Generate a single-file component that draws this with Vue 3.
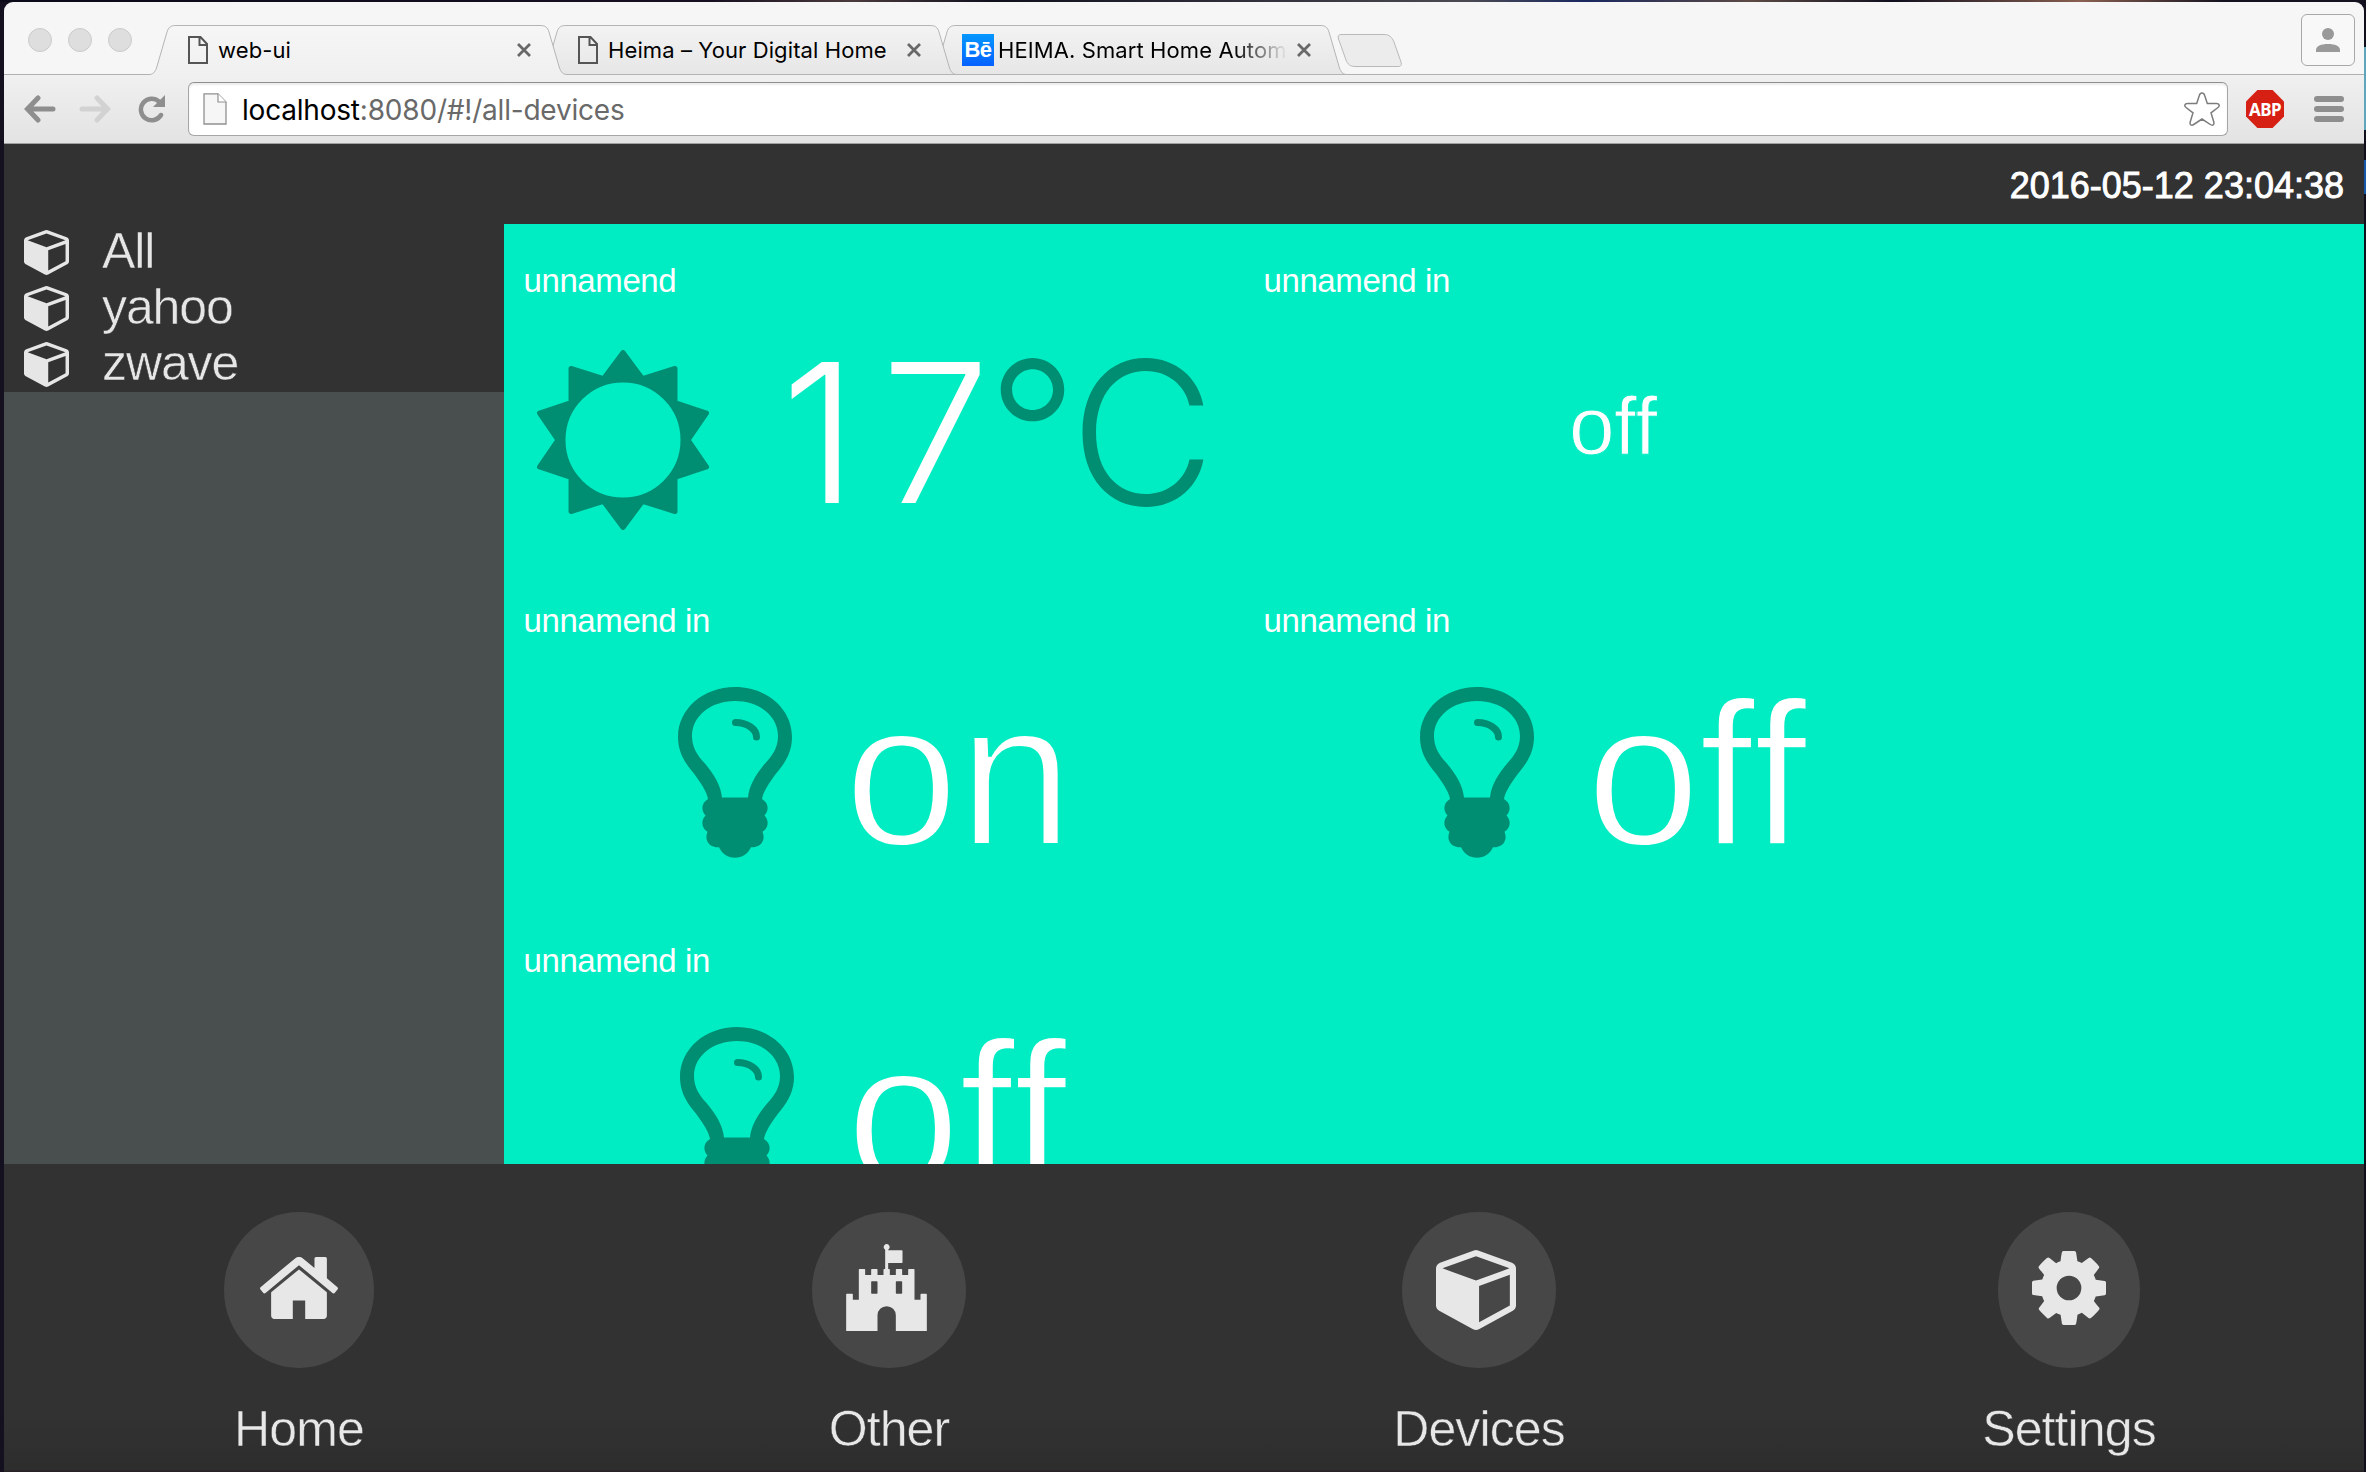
<script setup>
const tabs = [
  { title: 'web-ui', icon: 'page', active: true },
  { title: 'Heima – Your Digital Home', icon: 'page' },
  { title: 'HEIMA. Smart Home Autom', icon: 'be' },
]

const groups = ['All', 'yahoo', 'zwave']

const devices = [
  { id: 1, name: 'unnamend', kind: 'weather', value: '17', unit: '°C' },
  { id: 2, name: 'unnamend in', kind: 'plain', value: 'off' },
  { id: 3, name: 'unnamend in', kind: 'light', value: 'on' },
  { id: 4, name: 'unnamend in', kind: 'light', value: 'off' },
  { id: 5, name: 'unnamend in', kind: 'light', value: 'off' },
]

const cubePath =
  'M896 1629l640-349v-636l-640 233v752zm-64-865l698-254-698-254-698 254zm832-252v768q0 35-18 65t-49 47l-704 384q-28 16-61 16t-61-16l-704-384q-31-17-49-47t-18-65v-768q0-40 23-73t61-47l704-256q22-8 44-8t44 8l704 256q38 14 61 47t23 73z'

const nav = [
  {
    label: 'Home',
    key: 'home',
    box: '26 256 1612 1280',
    path: 'M1408 992v480q0 26-19 45t-45 19h-384v-384h-256v384h-384q-26 0-45-19t-19-45v-480q0-1 .5-3t.5-3l575-474 575 474q1 2 1 6zm223-69l-62 74q-8 9-21 11h-3q-13 0-21-7l-692-577-692 577q-12 8-24 7-13-2-21-11l-62-74q-8-10-7-23.5t11-21.5l719-599q32-26 76-26t76 26l244 204v-195q0-14 9-23t23-9h192q14 0 23 9t9 23v408l219 182q10 8 11 21.5t-7 23.5z',
  },
  {
    label: 'Other',
    key: 'other',
    box: '196 161 242 261',
    path: 'M196 422V312q0-2 2-2h16q2 0 2 2v16h18V238q0-2 2-2h15q2 0 2 2v16h18V238q0-2 2-2h15q2 0 2 2v16h18V238q0-2 2-2h3V178a9 9 0 1 1 9 0v2h41q2 0 2 2v34q0 2-2 2h-41v18h3q2 0 2 2v16h18V238q0-2 2-2h15q2 0 2 2v16h18V238q0-2 2-2h15q2 0 2 2v90h18V312q0-2 2-2h15q2 0 2 2V422h-93V375a27.500 27.500 0 0 0-55 0V422zM273 273q-2 0-2 2v33q0 2 2 2h15q2 0 2-2v-33q0-2-2-2zM347 273q-2 0-2 2v33q0 2 2 2h15q2 0 2-2v-33q0-2-2-2z',
  },
  { label: 'Devices', key: 'devices-link', box: '0 128 1664 1664', path: cubePath },
  {
    label: 'Settings',
    key: 'settings',
    box: '128 128 1536 1536',
    path: 'M1152 896q0-106-75-181t-181-75-181 75-75 181 75 181 181 75 181-75 75-181zm512-109v222q0 12-8 23t-20 13l-185 28q-19 54-39 91 35 50 107 138 10 12 10 25t-9 23q-27 37-99 108t-94 71q-12 0-26-9l-138-108q-44 23-91 38-16 136-29 186-7 28-36 28h-222q-14 0-24.500-8.500t-11.500-21.500l-28-184q-49-16-90-37l-141 107q-10 9-25 9-14 0-25-11-126-114-165-168-7-10-7-23 0-12 8-23 15-21 51-66.500t54-70.500q-27-50-41-99l-183-27q-13-2-21-12.500t-8-23.500v-222q0-12 8-23t19-13l186-28q14-46 39-92-40-57-107-138-10-12-10-24 0-10 9-23 26-36 98.500-107.500t94.500-71.500q13 0 26 10l138 107q44-23 91-38 16-136 29-186 7-28 36-28h222q14 0 24.500 8.500t11.500 21.500l28 184q49 16 90 37l142-107q9-9 24-9 13 0 25 10 129 119 165 170 7 8 7 22 0 12-8 23-15 21-51 66.500t-54 70.500q26 50 41 98l183 28q13 2 21 12.500t8 23.500z',
  },
]
</script>

<template>
  <div class="desktop">
    <div class="window">
      <div class="tabstrip">
        <div class="lights"><i></i><i></i><i></i></div>
        <div class="tabs">
          <div v-for="(tab, i) in tabs" :key="i" class="tab" :class="{ active: tab.active }">
            <svg class="tab-shape" viewBox="0 0 418 50">
              <defs>
                <linearGradient id="tab-on" x1="0" y1="0" x2="0" y2="1">
                  <stop offset="0" stop-color="#f6f6f6" /><stop offset="1" stop-color="#f0f0f0" />
                </linearGradient>
                <linearGradient id="tab-off" x1="0" y1="0" x2="0" y2="1">
                  <stop offset="0" stop-color="#f3f3f3" /><stop offset="1" stop-color="#e6e6e6" />
                </linearGradient>
              </defs>
              <path
                class="tab-fill"
                d="M0 50V49.500C4 49.500 6 47 7.500 43L18 7C19.500 2 22 .5 27 .5H391C396 .5 398.500 2 400 7L410.500 43C412 47 414 49.500 418 49.500V50Z"
              />
              <path
                class="tab-line"
                d="M0 49.500C4 49.500 6 47 7.500 43L18 7C19.500 2 22 .5 27 .5H391C396 .5 398.500 2 400 7L410.500 43C412 47 414 49.500 418 49.500"
              />
              <path v-if="!tab.active" class="tab-line" d="M0 49.500H418" />
            </svg>
            <svg v-if="tab.icon === 'page'" class="page-icon" viewBox="0 0 20 28">
              <path d="M1 1H12.500L19 8V27H1ZM11.500 1V9H19" fill="none" stroke="#555" stroke-width="2" />
            </svg>
            <span v-else class="be">Bē</span>
            <span class="title" :class="{ faded: tab.icon === 'be' }">{{ tab.title }}</span>
            <svg class="close" viewBox="0 0 14 14">
              <path d="M1 1L13 13M13 1L1 13" stroke="#686868" stroke-width="2.800" />
            </svg>
          </div>
          <svg class="new-tab" viewBox="0 0 66 33">
            <path
              d="M4 .5H47C52 .5 55 3 57 8L64 28C65 31 64 32.500 61 32.500H18C13 32.500 10.500 30 9 26L1.500 5C.5 2 1.500 .5 4 .5Z"
              fill="#ececec"
              stroke="#b9b9b9"
            />
          </svg>
        </div>
        <div class="profile">
          <svg viewBox="0 0 24 24">
            <circle cx="12" cy="6" r="6" />
            <path d="M0 24V22C0 18 5 16 12 16S24 18 24 22V24Z" />
          </svg>
        </div>
      </div>

      <div class="toolbar">
        <svg class="back" viewBox="0 0 32 28">
          <path d="M14 3L3.500 14L14 25M4 14H29" />
        </svg>
        <svg class="back forward" viewBox="0 0 32 28">
          <path d="M18 3L28.500 14L18 25M28 14H3" />
        </svg>
        <svg class="reload" viewBox="0 0 28 28">
          <path d="M23 20A10.800 10.800 0 1 1 21 6.500" fill="none" stroke="#8e8e8e" stroke-width="4.500" stroke-linecap="round" />
          <path d="M27 0V12H15Z" fill="#8e8e8e" />
        </svg>
        <div class="omnibox">
          <svg class="doc" viewBox="0 0 24 32">
            <path d="M1 .8H15L23 9V31H1Z" fill="#f6f6f6" stroke="#909090" stroke-width="1.300" />
            <path d="M15 .8V9H23" fill="#fff" stroke="#909090" stroke-width="1.200" />
          </svg>
          <span class="url"><b>localhost</b>:8080/#!/all-devices</span>
          <svg class="star" viewBox="0 0 36 36">
            <path
              d="M18 2C19.500 2 20.300 3 20.700 4.500L23.300 12.500H32.500C35.500 12.500 36 15 34 16.500L27 21.800L29.800 31C30.500 33.800 28.500 35 26.300 33.500L18 28L9.700 33.500C7.500 35 5.500 33.800 6.200 31L9 21.800L2 16.500C0 15 .5 12.500 3.500 12.500H12.700L15.300 4.500C15.700 3 16.500 2 18 2Z"
              fill="#fff"
              stroke="#7c7c7c"
              stroke-width="1.500"
            />
          </svg>
        </div>
        <div class="abp">ABP</div>
        <div class="menu"><i></i><i></i><i></i></div>
      </div>

      <header class="topbar">2016-05-12 23:04:38</header>

      <div class="body">
        <aside class="sidebar">
          <ul>
            <li v-for="g in groups" :key="g">
              <svg viewBox="0 128 1664 1664"><path :d="cubePath" /></svg>
              <span>{{ g }}</span>
            </li>
          </ul>
        </aside>
        <main class="devices">
          <section v-for="d in devices" :key="d.id" class="card">
            <h2>{{ d.name }}</h2>
            <div class="reading" :class="[d.kind, d.value]">
              <svg v-if="d.kind === 'weather'" class="sun" viewBox="-90 -90 180 180">
                <path
                  fill-rule="evenodd"
                  d="M0-87.500L19.500-61.300L52-71.500V-37.500L83.500-27L65 0L83.500 27L52 37.500V71.500L19.500 61.300L0 87.500L-19.500 61.300L-52 71.500V37.500L-83.500 27L-65 0L-83.500-27L-52-37.500V-71.500L-19.500-61.300ZM-60 0A60 60 0 1 0 60 0A60 60 0 1 0-60 0Z"
                />
              </svg>
              <svg v-if="d.kind === 'light'" class="bulb" viewBox="-57 97 114 171">
                <path
                  fill-rule="evenodd"
                  d="M0 97C32 97 57 119 57 147C57 160 52 170 44 180C35 191 28 202 27 209C34 213 34 221 29.500 225.500C34 230 34 238 27.500 241.700C31 250 26 257.500 16 257.300C13 264 7 267.700 0 267.700C-7 267.700-13 264-16 257.300C-26 257.500-31 250-27.500 241.700C-34 238-34 230-29.500 225.500C-34 221-34 213-27 209C-28 202-35 191-44 180C-52 170-57 160-57 147C-57 119-32 97 0 97ZM0 111C-24 111-43 126-43 146C-43 157-38 165-30.500 173C-21 184-14 196-13 207.500H13C14 196 21 184 30.500 173C38 165 43 157 43 146C43 126 24 111 0 111Z"
                />
                <path d="M.5 132.500C12 132.500 21.500 139 21.500 147" class="glare" />
              </svg>
              <span class="value">{{ d.value }}</span>
              <span v-if="d.unit" class="unit">{{ d.unit }}</span>
            </div>
          </section>
        </main>
      </div>

      <nav class="nav">
        <a v-for="n in nav" :key="n.key" :class="n.key">
          <span class="disc">
            <svg :viewBox="n.box"><path :d="n.path" fill-rule="evenodd" /></svg>
          </span>
          <span class="label">{{ n.label }}</span>
        </a>
      </nav>
    </div>
  </div>
</template>

<style>
body {
  background: #14101f;
}
</style>

<style scoped>
.desktop {
  box-sizing: border-box;
  width: 2366px;
  height: 1472px;
  padding: 2px 2px 0 4px;
  overflow: hidden;
  background:
    linear-gradient(#10101c 47px, #5fa6bd 47px, #5fa6bd 130px, #10101c 130px, #10101c 160px, #1558a8 160px, #1558a8 194px, #10101c 194px)
      right / 2px 100% no-repeat,
    linear-gradient(90deg, #0b0a18, #171021 30%, #4a3a3c 36%, #10101e 42%, #4b4a52 62%, #1a2860 67%, #5c4a44 74%, #100f1e 80%, #8a6050 88%, #14121f 94%) top / 100% 2px
      no-repeat,
    #14101f;
}
.window {
  display: flex;
  flex-direction: column;
  width: 2360px;
  height: 1470px;
  overflow: hidden;
  border-radius: 9px 9px 0 0;
  background: #323232;
}

/* browser chrome */
.tabstrip {
  display: flex;
  box-sizing: border-box;
  height: 73px;
  background: linear-gradient(#b0b0b0, #b0b0b0) bottom / 100% 1px no-repeat, #f6f6f6;
}
.lights {
  display: flex;
  gap: 16px;
  width: 121px;
  padding: 26px 0 0 24px;
}
.lights i {
  box-sizing: border-box;
  width: 24px;
  height: 24px;
  border: 1px solid #cbcbcb;
  border-radius: 50%;
  background: #dedede;
}
.tabs {
  display: flex;
  flex: 1;
  padding-top: 23px;
}
.tab {
  position: relative;
  display: flex;
  flex: none;
  align-items: center;
  box-sizing: border-box;
  width: 418px;
  height: 50px;
  padding: 0 36px 0 39px;
  font: 22px/30px Inter, sans-serif;
  color: #000;
  z-index: 1;
}
.tab + .tab {
  margin-left: -28px;
}
.tab:nth-child(1) {
  z-index: 3;
}
.tab:nth-child(2) {
  z-index: 2;
}
.tab:nth-child(3) {
  padding-left: 33px;
}
.tab-shape {
  position: absolute;
  inset: 0;
  z-index: -1;
}
.tab-fill {
  fill: url(#tab-off);
}
.active .tab-fill {
  fill: url(#tab-on);
}
.tab-line {
  fill: none;
  stroke: #b4b4b4;
}
.page-icon {
  width: 20px;
  height: 28px;
  margin-right: 10px;
}
.be {
  width: 32px;
  height: 32px;
  margin-right: 4px;
  background: linear-gradient(#0598ff, #0560ff);
  color: #fff;
  font: bold 22px/32px "Liberation Sans", sans-serif;
  letter-spacing: -0.5px;
  text-align: center;
}
.title {
  flex: 1;
  overflow: hidden;
  white-space: nowrap;
  letter-spacing: 0.1px;
}
.faded {
  margin-right: 12px;
  -webkit-mask-image: linear-gradient(90deg, #000 82%, transparent 101%);
  mask-image: linear-gradient(90deg, #000 82%, transparent 101%);
}
.close {
  width: 14px;
  height: 14px;
}
.new-tab {
  width: 66px;
  height: 33px;
  margin: 9px 0 0 -10px;
}
.profile {
  display: flex;
  align-items: center;
  justify-content: center;
  box-sizing: border-box;
  width: 54px;
  height: 52px;
  margin: 12px 9px 0 0;
  border: 1px solid #a8a8a8;
  border-radius: 6px;
  background: #f8f8f8;
}
.profile svg {
  width: 24px;
  height: 24px;
  fill: #999;
}
.toolbar {
  display: flex;
  align-items: center;
  box-sizing: border-box;
  height: 69px;
  padding: 0 20px;
  border-bottom: 1px solid #a0a0a0;
  background: linear-gradient(#f0f0f0, #e3e3e3);
}
.back {
  width: 32px;
  height: 28px;
  fill: none;
  stroke: #8e8e8e;
  stroke-width: 5;
  stroke-linecap: round;
}
.forward {
  margin-left: 23px;
  stroke: #d2d2d2;
}
.reload {
  width: 28px;
  height: 28px;
  margin: 0 22px 0 27px;
}
.omnibox {
  display: flex;
  align-items: center;
  box-sizing: border-box;
  width: 2040px;
  height: 54px;
  padding: 0 7px 0 14px;
  border: 1px solid #a6a6a6;
  border-top-color: #8f8f8f;
  border-radius: 6px;
  background: #fff;
  box-shadow: inset 0 2px 2px #ececec;
}
.doc {
  width: 24px;
  height: 32px;
}
.url {
  flex: 1;
  margin-left: 15px;
  padding-top: 1px;
  font: 28px/36px Inter, sans-serif;
  letter-spacing: -0.2px;
  color: #696969;
}
.url b {
  font-weight: 400;
  color: #000;
}
.star {
  width: 36px;
  height: 36px;
}
.abp {
  width: 38px;
  height: 38px;
  margin-left: 18px;
  background: #d62013;
  clip-path: polygon(30% 0, 70% 0, 100% 30%, 100% 70%, 70% 100%, 30% 100%, 0 70%, 0 30%);
  color: #fff;
  font: bold 17px/39px "Noto Sans", sans-serif;
  letter-spacing: -0.5px;
  text-align: center;
}
.menu {
  display: flex;
  flex-direction: column;
  gap: 4px;
  margin-left: 30px;
}
.menu i {
  width: 30px;
  height: 6px;
  border-radius: 3px;
  background: #8e8e8e;
}

/* application */
.topbar {
  box-sizing: border-box;
  height: 80px;
  padding: 2px 20px 0 0;
  background: #323232;
  color: #fff;
  font: 36px/80px "Liberation Sans", sans-serif;
  text-align: right;
  -webkit-text-stroke: 0.9px #fff;
}
.body {
  display: flex;
  height: 940px;
}
.sidebar {
  width: 500px;
  background: #494e4e;
}
ul {
  margin: 0;
  padding: 0;
  list-style: none;
  background: #323232;
}
li {
  display: flex;
  align-items: center;
  height: 56px;
  padding-left: 20px;
}
li svg {
  width: 45px;
  height: 45px;
  fill: #e6e6e6;
}
li span {
  margin-left: 33px;
  padding-bottom: 1px;
  font: 50px/55px "Liberation Sans", sans-serif;
  letter-spacing: -1.100px;
  color: #e6e6e6;
  -webkit-text-stroke: 0.5px #323232;
}
.devices {
  display: grid;
  flex: 1;
  grid-template-columns: 740px 740px;
  grid-auto-rows: 340px;
  overflow: hidden;
  background: #00edc4;
  color: #fff;
  font-family: "Liberation Sans", sans-serif;
}
h2 {
  margin: 0;
  padding: 37px 0 0 19.500px;
  font: 400 33px/39px "Liberation Sans", sans-serif;
  letter-spacing: -0.400px;
}
.reading {
  display: flex;
  align-items: center;
  height: 265px;
  font-size: 206px;
  line-height: 265px;
}
.reading svg {
  flex: none;
  fill: #008e73;
}
/* a background-coloured outline trims the regular weight down to a light one */
.value {
  -webkit-text-stroke: 4px #00edc4;
}
.weather {
  padding-left: 29px;
}
.sun {
  width: 180px;
  height: 180px;
  margin: 15px 68px 0 0;
}
.sun path {
  stroke: #008e73;
  stroke-width: 5;
  stroke-linejoin: round;
}
.weather .value {
  width: 206px;
  font: 300 194px/265px Inter, sans-serif;
  letter-spacing: 24px;
  white-space: nowrap;
  -webkit-text-stroke: 0;
}
.unit {
  color: #008e73;
  font: 300 200px/265px Inter, sans-serif;
  letter-spacing: -6px;
}
.light {
  padding-left: 176px;
}
.light.on {
  padding-left: 174px;
}
.light .value {
  padding-top: 4px;
  letter-spacing: -2px;
}
.light.on .value {
  letter-spacing: 0;
}
.bulb {
  width: 114px;
  height: 171px;
  margin-right: 52px;
}
.bulb .glare {
  fill: none;
  stroke: #008e73;
  stroke-width: 7;
  stroke-linecap: round;
}
.plain {
  padding: 0 0 14px 325px;
  height: 251px;
  font-size: 82px;
}
.plain .value {
  letter-spacing: -0.700px;
  -webkit-text-stroke-width: 1px;
}
.nav {
  display: grid;
  grid-template-columns: repeat(4, 590px);
  height: 308px;
  background: linear-gradient(#323232 250px, #2e2d2e 306px, #262225 307px);
  color: #e7e7e7;
}
.nav a {
  display: flex;
  flex-direction: column;
  align-items: center;
  padding-top: 48px;
}
.disc {
  display: flex;
  align-items: center;
  justify-content: center;
  box-sizing: border-box;
  width: 154px;
  height: 156px;
  padding: 0 6px 5px 0;
  border-radius: 50%;
  background: #474747;
}
.disc svg {
  width: 80px;
  height: 80px;
  fill: #e7e7e7;
}
.home .disc {
  width: 150px;
  padding-right: 0;
}
.home svg {
  width: 78px;
  height: 62px;
}
.other svg {
  width: 81px;
  height: 87px;
}
.devices-link .disc {
  padding-bottom: 0;
}
.settings .disc {
  width: 142px;
  padding-right: 0;
}
.settings svg {
  width: 74px;
  height: 74px;
}
.label {
  margin-top: 31px;
  font: 50px/60px "Liberation Sans", sans-serif;
  letter-spacing: -0.900px;
  -webkit-text-stroke: 0.5px #303030;
}
</style>
